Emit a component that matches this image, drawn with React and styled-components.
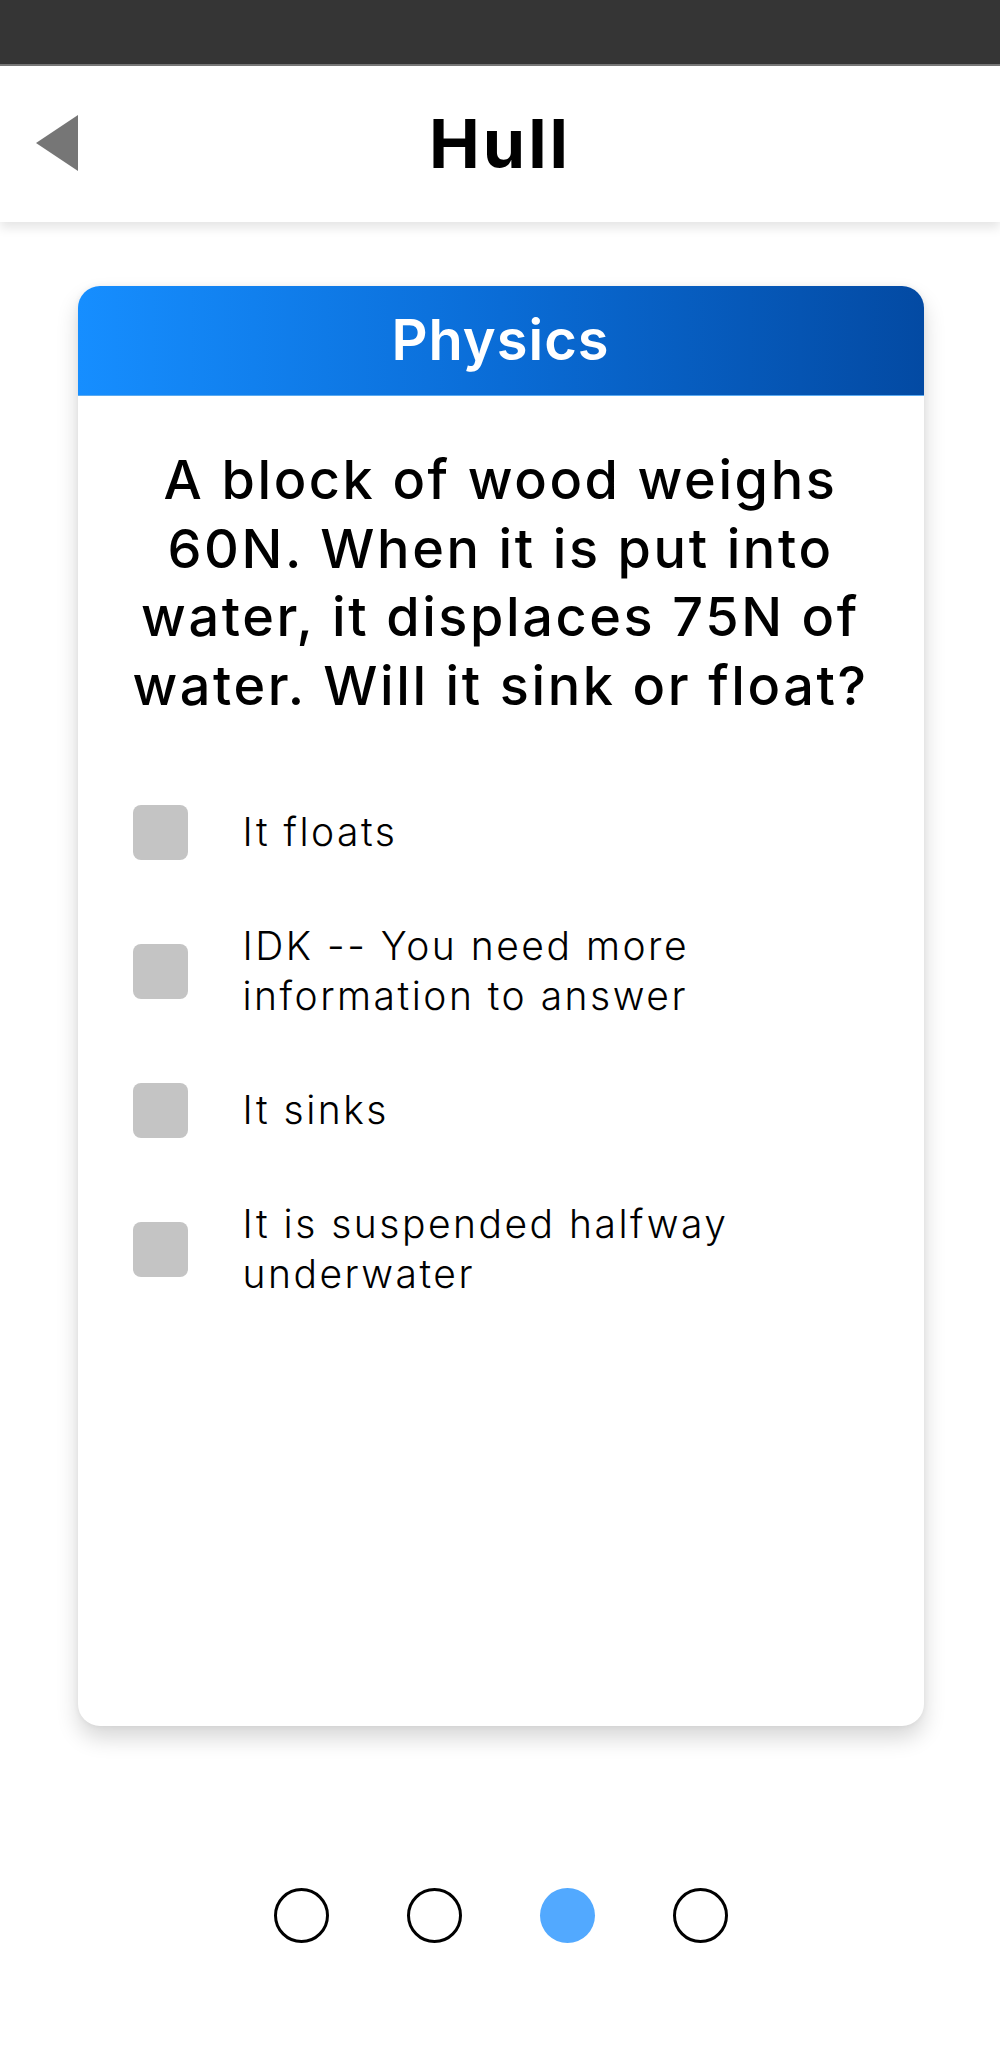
import React from "react";
import styled, { createGlobalStyle } from "styled-components";

const GlobalStyle = createGlobalStyle`
  html, body { margin: 0; padding: 0; background: #ffffff; }
  body { font-family: Inter, "Noto Sans", "DejaVu Sans", sans-serif; color: #000; }
  * { box-sizing: border-box; }
`;

const Screen = styled.div`
  width: 1000px;
  min-height: 2056px;
  display: flex;
  flex-direction: column;
  background: #fff;
`;

const StatusBar = styled.div`
  height: 66px;
  background: #353535;
  border-bottom: 2px solid #777;
  flex-shrink: 0;
`;

const Header = styled.header`
  position: relative;
  height: 156px;
  display: flex;
  align-items: center;
  justify-content: center;
  background: #fff;
  box-shadow: 0 6px 10px rgba(0, 0, 0, 0.1);
  z-index: 1;
`;

const BackButton = styled.button`
  position: absolute;
  left: 36px;
  top: 50%;
  transform: translateY(-50%);
  margin-top: -1px;
  width: 42px;
  height: 56px;
  padding: 0;
  border: none;
  background: none;
  cursor: pointer;
  display: flex;
`;

const Title = styled.h1`
  margin: 0;
  font-family: Inter, sans-serif;
  font-weight: 700;
  font-size: 68px;
  letter-spacing: 3px;
  line-height: 1;
  margin-top: -2px;
`;

const Main = styled.main`
  display: flex;
  flex-direction: column;
  align-items: center;
  padding-top: 64px;
`;

const Card = styled.section`
  width: 846px;
  height: 1440px;
  margin-left: 1px;
  border-radius: 22px;
  background: #fff;
  box-shadow: 0 12px 22px rgba(0, 0, 0, 0.16), 0 0 6px rgba(0, 0, 0, 0.06);
  overflow: hidden;
  display: flex;
  flex-direction: column;
`;

const CardHeader = styled.div`
  height: 110px;
  flex-shrink: 0;
  display: flex;
  align-items: center;
  justify-content: center;
  background: linear-gradient(90deg, #168eff 0%, #0a6cd6 50%, #034aa3 100%);
  border-bottom: 1px solid #5aaaf0;
`;

const Subject = styled.h2`
  margin: 0;
  color: #fff;
  font-family: Inter, sans-serif;
  font-weight: 600;
  font-size: 56px;
  letter-spacing: 1px;
  line-height: 1;
  margin-top: -2px;
`;

const Question = styled.p`
  margin: 50px auto 0;
  width: 780px;
  text-align: center;
  font-family: Inter, sans-serif;
  font-weight: 500;
  font-size: 54px;
  line-height: 68.5px;
  letter-spacing: 2.6px;
`;

const Options = styled.ul`
  list-style: none;
  margin: 58px 0 0;
  padding: 0 40px 0 55px;
  display: flex;
  flex-direction: column;
  gap: 30px;
`;

const Option = styled.li`
  height: 109px;
  display: flex;
  align-items: center;
  gap: 55px;
  cursor: pointer;
`;

const Box = styled.span`
  width: 55px;
  height: 55px;
  flex-shrink: 0;
  border-radius: 8px;
  background: ${(p) => (p.$checked ? "#1a8cff" : "#c4c4c4")};
`;

const OptionText = styled.span`
  max-width: 510px;
  font-family: Inter, sans-serif;
  font-weight: 300;
  font-size: 39px;
  line-height: 50px;
  letter-spacing: 2.5px;
  color: #000;
  margin-top: -2px;
`;

const Pager = styled.nav`
  display: flex;
  justify-content: center;
  gap: 78px;
  margin-top: 162px;
  padding-left: 1px;
`;

const Dot = styled.span`
  width: 55px;
  height: 55px;
  border-radius: 50%;
  border: ${(p) => (p.$active ? "none" : "3px solid #000")};
  background: ${(p) => (p.$active ? "#52a9ff" : "transparent")};
`;

const options = [
  "It floats",
  "IDK -- You need more information to answer",
  "It sinks",
  "It is suspended halfway underwater",
];

export default function App() {
  return (
    <>
      <GlobalStyle />
      <Screen>
        <StatusBar />
        <Header>
          <BackButton aria-label="Back">
            <svg width="42" height="56" viewBox="0 0 42 56">
              <polygon points="42,0 42,56 0,28" fill="#767676" />
            </svg>
          </BackButton>
          <Title>Hull</Title>
        </Header>
        <Main>
          <Card>
            <CardHeader>
              <Subject>Physics</Subject>
            </CardHeader>
            <Question>
              A block of wood weighs 60N. When it is put into water, it
              displaces 75N of water. Will it sink or float?
            </Question>
            <Options>
              {options.map((o) => (
                <Option key={o}>
                  <Box />
                  <OptionText>{o}</OptionText>
                </Option>
              ))}
            </Options>
          </Card>
          <Pager>
            {[0, 1, 2, 3].map((i) => (
              <Dot key={i} $active={i === 2} />
            ))}
          </Pager>
        </Main>
      </Screen>
    </>
  );
}
